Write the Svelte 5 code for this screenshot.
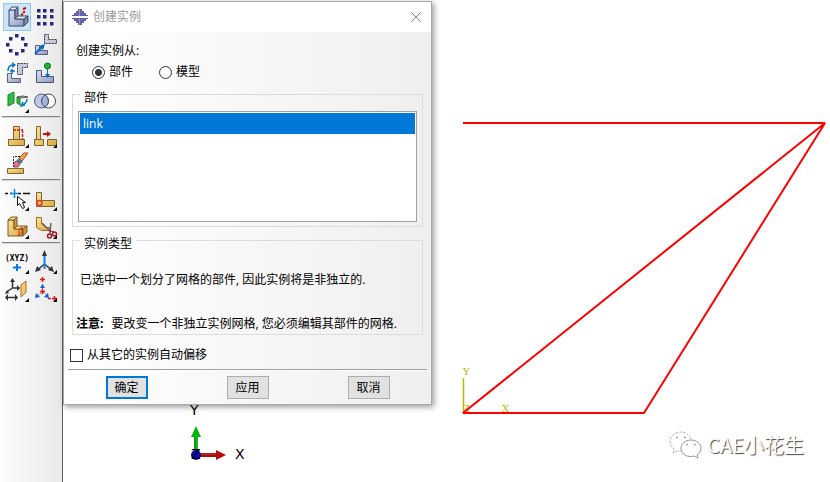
<script lang="ts">
  type Tool = { id: string; label: string; menu?: boolean }

  // Toolbox groups, two tools per row
  const groups: Tool[][] = [
    [
      { id: 'create', label: '创建实例' },
      { id: 'linear', label: '线性阵列' },
      { id: 'radial', label: '环形阵列' },
      { id: 'translate', label: '平移实例' },
      { id: 'rotate', label: '旋转实例' },
      { id: 'translateTo', label: '平移到' },
      { id: 'face', label: '面约束', menu: true },
      { id: 'merge', label: '合并/切割实例' }
    ],
    [
      { id: 'link', label: '链接实例', menu: true },
      { id: 'replace', label: '替换实例', menu: true },
      { id: 'erase', label: '删除特征' }
    ],
    [
      { id: 'query', label: '创建分区', menu: true },
      { id: 'partEdge', label: '分割边', menu: true },
      { id: 'partCell', label: '分割几何元素', menu: true },
      { id: 'cut', label: '几何编辑', menu: true }
    ],
    [
      { id: 'point', label: '创建基准点', menu: true },
      { id: 'axis', label: '创建基准轴', menu: true },
      { id: 'plane', label: '创建基准平面', menu: true },
      { id: 'csys', label: '创建基准坐标系', menu: true }
    ]
  ]

  const grid = [8, 14, 21]
  const ring = [0, 1, 2, 3, 4, 5, 6, 7].map((i) => ({
    x: Math.round(14 + 9 * Math.cos((i * Math.PI) / 4)),
    y: Math.round(14 + 9 * Math.sin((i * Math.PI) / 4))
  }))

  let open = $state(true)
  let active = $state('create')
  let source = $state('part')
  let part = $state('link')
  let autoOffset = $state(false)

  function selectTool(id: string) {
    active = id
    if (id === 'create') open = true
  }
</script>

{#snippet icon(id: string)}
  {#if id === 'create'}
    <path d="M6 7h6v9h9v7H6z" fill="url(#steel)" stroke="#3d4868" />
    <path d="M6 7l3-3h6l-3 3zM12 16l3-3h10l-4 3z" fill="#e6ecf8" stroke="#3d4868" />
    <path d="M12 7l3-3v9l-3 3zM21 16l4-3v6l-4 4z" fill="#7d8bb0" stroke="#3d4868" />
    <path d="M20 6l3-1M20 9h2M18 12l2-1" fill="none" stroke="#d00" stroke-width="2" />
  {:else if id === 'linear'}
    {#each grid as x}
      {#each grid as y}
        <rect x={x - 2} y={y - 2} width="3.500" height="3.500" fill="#27277f" />
      {/each}
    {/each}
  {:else if id === 'radial'}
    {#each ring as dot}
      <rect x={dot.x - 2} y={dot.y - 2} width="3.500" height="3.500" fill="#27277f" />
    {/each}
  {:else if id === 'translate'}
    <path d="M13.500 3.500h4v5h8v4h-12z" fill="#c3cbe0" stroke="#333" stroke-dasharray="2 1" />
    <path d="M4.500 14.500h4v5h8v4h-12z" fill="url(#steel)" stroke="#56617f" />
    <path d="M4 23l7-7" stroke="#06c" stroke-width="2" />
    <path d="M14 13l-2 6-4-4z" fill="#06c" />
  {:else if id === 'rotate'}
    <path d="M14.500 4.500h10v4h-5v7h-5z" fill="#c3cbe0" stroke="#333" stroke-dasharray="2 1" />
    <path d="M4.500 14.500h4v5h9v4h-13z" fill="url(#steel)" stroke="#56617f" />
    <path d="M5 12c0-4 2-6 5-6M9 10v5M7 12h5" fill="none" stroke="#0a6fd0" stroke-width="1.500" />
    <path d="M9 3l4 3-4 3z" fill="#0a6fd0" />
  {:else if id === 'translateTo'}
    <path d="M5.500 11.500h5v6h12v6h-17z" fill="url(#steel)" stroke="#46516f" />
    <path d="M16.500 8v8" stroke="#0a6fd0" />
    <path d="M14 15h5l-2.500 4z" fill="#06c" />
    <circle cx="16.500" cy="7" r="3" fill="#18b82a" stroke="#087014" />
  {:else if id === 'face'}
    <path d="M5 8l6-3v11l-6 3z" fill="#34bd42" stroke="#128422" />
    <path d="M14 10l3 1v7l-3-2z" fill="#34bd42" stroke="#128422" />
    <path d="M14 10l6-1 5 1-8 1z" fill="#ddd" stroke="#555" />
    <path d="M24 12c0 3-2 5-5 6M22 18l-4 1 2-4" fill="none" stroke="#0878c8" stroke-width="1.500" />
  {:else if id === 'merge'}
    <circle cx="17.500" cy="14" r="7" fill="#fff" stroke="#444" />
    <circle cx="10.500" cy="14" r="7" fill="#bcc7e2" stroke="#555c70" />
    <path d="M14 8a7 7 0 0 1 0 12a7 7 0 0 1 0-12z" fill="#a5b3d8" stroke="#3d4868" />
  {:else if id === 'link'}
    <path d="M10.500 4.500h6v13h5v6h-16v-6h5z" fill="url(#brass)" stroke="#80652a" />
    <path d="M5.500 17.500h16" stroke="#80652a" />
    <path d="M10 8h10M19.500 8v10" fill="none" stroke="#e01818" stroke-width="1.500" stroke-dasharray="3 1" />
  {:else if id === 'replace'}
    <path d="M5.500 4.500h4v13h3v6h-9v-6h2zM16.500 17.500h9v6h-9z" fill="url(#brass)" stroke="#80652a" />
    <path d="M3.500 17.500h9" stroke="#80652a" />
    <path d="M12 12h5" stroke="#c81010" stroke-width="2" />
    <path d="M16 9l4 3-4 3z" fill="#c81010" />
  {:else if id === 'erase'}
    <path d="M10.500 17V6.500h7" fill="none" stroke="#222" stroke-dasharray="2 1" />
    <path d="M4.500 18.500h16v5h-16z" fill="url(#brass)" stroke="#80652a" />
    <path d="M16 8l5-5h4l-6 8z" fill="#f5a04a" stroke="#9a5a1c" />
    <path d="M13 11l3-3 4 4-3 2z" fill="#5a719c" />
    <path d="M11 13l2-2 4 3-2 3-4 0z" fill="#dc7c94" stroke="#934558" />
  {:else if id === 'query'}
    <path d="M2 8.500h3M7 8.500h2M15 8.500h3M20 8.500h7" stroke="#111" stroke-width="1.500" />
    <path d="M11.500 4v9M7 8.500h8" stroke="#0b86e4" stroke-width="1.500" />
    <path d="M14.500 11.500v9l2-2 3 5 2-1-2-5h3z" fill="#fff" stroke="#111" />
  {:else if id === 'partEdge'}
    <path d="M5.500 7.500h5v8h13v6h-18z" fill="url(#brass)" stroke="#80652a" />
    <circle cx="8.500" cy="18" r="2.500" fill="none" stroke="#e32" stroke-width="1.500" />
  {:else if id === 'partCell'}
    <path d="M5 7h6v9h9v7H5z" fill="url(#brass)" stroke="#7a5d20" />
    <path d="M5 7l3-3h6l-3 3zM11 16l3-3h10l-4 3z" fill="#f5db91" stroke="#7a5d20" />
    <path d="M11 7l3-3v9l-3 3zM20 16l4-3v6l-4 4z" fill="#c89b3d" stroke="#7a5d20" />
    <path d="M16 17l3-3v6l-3 3z" fill="none" stroke="#e01818" />
  {:else if id === 'cut'}
    <path d="M5.500 4.500h5v6l4 4h5v3h-9l-5-3z" fill="url(#brass)" stroke="#a06a20" />
    <path d="M11 10l9 9M20 10l-1 8" stroke="#666" stroke-width="1.500" />
    <circle cx="18.500" cy="23" r="2" fill="none" stroke="#a01822" stroke-width="1.500" />
    <circle cx="23.500" cy="21" r="2" fill="none" stroke="#a01822" stroke-width="1.500" />
    <path d="M19 17v4M19 18l4 1" stroke="#a01822" />
  {:else if id === 'point'}
    <text class="xyz" x="14" y="13" text-anchor="middle">(XYZ)</text>
    <path d="M14 16v7M10 19.500h8" stroke="#0b75d8" stroke-width="2" />
  {:else if id === 'axis'}
    <path d="M13.500 16l-7 6M13.500 16l7 6" stroke="#333" stroke-width="1.500" />
    <path d="M13.500 5v16" stroke="#0b86e4" stroke-width="2" />
    <path d="M11 8l2.500-6 2.500 6zM4 24l2-6 4 4zM23 24l-2-6-4 4z" fill="#333" />
  {:else if id === 'plane'}
    <path d="M9.500 4v8h7M9.500 12l-6 4M4 21.500h10" fill="none" stroke="#333" stroke-width="1.500" />
    <path d="M7 6l2.500-4 2.500 4zM14 9l3 3-3 3zM2 18l2-4 2 3zM5 18l-3 3.500 3 3.500zM12 18l3 3.500-3 3.500z" fill="#333" />
    <path d="M18 9l5-4v11l-5 5z" fill="#f6c878" stroke="#a96c22" />
  {:else if id === 'csys'}
    <path d="M11.500 8v8l-5 4M12 16l5 4" fill="none" stroke="#777" stroke-dasharray="2 1" />
    <path d="M11.500 1v5M9 3.500h5M11.500 13v5M9 15.500h5M23.500 20v5M21 22.500h5M17 22.500h3" stroke="#e01818" stroke-width="1.500" />
    <path d="M9 12l2.500-4 2.500 4zM4 22l1-5 4 4zM18 22l-1-5-4 4z" fill="#0b65c8" />
  {/if}
{/snippet}

<svg class="defs" width="0" height="0" aria-hidden="true">
  <defs>
    <linearGradient id="steel" x1="0" y1="0" x2="1" y2="1">
      <stop offset="0" stop-color="#dbe3f4" />
      <stop offset="1" stop-color="#8d9bc0" />
    </linearGradient>
    <linearGradient id="brass" x1="0" y1="0" x2="1" y2="1">
      <stop offset="0" stop-color="#f9e39a" />
      <stop offset="1" stop-color="#dba944" />
    </linearGradient>
  </defs>
</svg>

<div class="app">
  <nav class="toolbox" aria-label="工具">
    {#each groups as group}
      <div class="group">
        {#each group as tool}
          <button
            class="tool"
            class:active={active === tool.id}
            aria-label={tool.label}
            onclick={() => selectTool(tool.id)}
          >
            <svg viewBox="0 0 28 28" width="28" height="28" aria-hidden="true">
              {@render icon(tool.id)}
              {#if tool.menu}
                <path d="M26 22v4h-4z" fill="#000" />
              {/if}
            </svg>
          </button>
        {/each}
      </div>
    {/each}
  </nav>

  <main class="viewport">
    <svg class="scene" viewBox="63 0 767 482" preserveAspectRatio="xMinYMin meet">
      <!-- datum axes -->
      <path d="M463.500 378v34" stroke="#b8b800" stroke-width="1.500" />
      <g class="datum">
        <text x="463" y="375">Y</text>
        <text x="502" y="412">X</text>
        <text x="463" y="412">Z</text>
      </g>
      <!-- link part -->
      <path
        d="M463 123H825L463 413H644L825 123"
        fill="none"
        stroke="#f00"
        stroke-width="2"
        stroke-linejoin="bevel"
      />
      <!-- view triad -->
      <path d="M196 455V436" stroke="#0a9d10" stroke-width="4" />
      <path d="M197 455V436" stroke="#2bd334" />
      <path d="M191 437l5-11 5 11z" fill="#08b510" />
      <path d="M198 455h18" stroke="#a50f10" stroke-width="4" />
      <path d="M198 454h18" stroke="#d23030" />
      <path d="M216 450l10 5-10 5z" fill="#b80b0d" />
      <circle cx="196" cy="455" r="5" fill="#0808b4" />
      <g class="triad">
        <text x="190" y="415">Y</text>
        <text x="235" y="459">X</text>
        <text x="191" y="459">Z</text>
      </g>
    </svg>

    <div class="watermark">
      <svg viewBox="0 0 34 30" width="34" height="30" aria-hidden="true">
        <path
          d="M22 9C20 4 16 2 12 2C6 2 1 6 1 11c0 4 2 6 4 8l-1 4 5-2h5"
          fill="none"
          stroke="#bbb"
          stroke-dasharray="3 1"
        />
        <path
          d="M22 10c6 0 10 4 10 8 0 3-1 5-4 7l1 3-4-2c-7 2-13-2-13-8 0-4 4-8 10-8z"
          fill="#fff"
          stroke="#999"
        />
        <path d="M7 8l2-1M15 8l2-1M17 15l2-1M25 15l2-1" stroke="#888" />
      </svg>
      <span>CAE小花生</span>
    </div>
  </main>

  {#if open}
    <div class="dialog" role="dialog" aria-labelledby="dialog-title">
      <header class="titlebar">
        <svg viewBox="0 0 16 16" width="16" height="16" aria-hidden="true">
          <path d="M6 0h4v2h2v2h2v3H2V4h2V2h2zM2 9h12v3h-2v2h-2v2H6v-2H4v-2H2z" fill="#6464a8" />
          <path d="M0 6h3v1H0zM0 9h3v1H0zM13 6h3v1h-3zM13 9h3v1h-3z" fill="#55559a" />
          <path d="M7.500 0v7M7.500 9v7" stroke="#9898cc" />
        </svg>
        <h1 id="dialog-title">创建实例</h1>
        <button class="close" aria-label="关闭" onclick={() => (open = false)}>
          <svg viewBox="0 0 12 12" width="12" height="12" aria-hidden="true">
            <path d="M1 1l10 10M11 1L1 11" stroke="#888" />
          </svg>
        </button>
      </header>

      <form class="body" onsubmit={(e) => e.preventDefault()}>
        <div class="source" role="radiogroup" aria-labelledby="source-label">
          <div id="source-label">创建实例从:</div>
          <div class="radios">
            <label><input type="radio" value="part" bind:group={source} />部件</label>
            <label><input type="radio" value="model" bind:group={source} />模型</label>
          </div>
        </div>

        <fieldset class="parts">
          <legend>部件</legend>
          <select size="5" aria-label="部件" bind:value={part}>
            <option value="link">link</option>
          </select>
        </fieldset>

        <fieldset class="kind">
          <legend>实例类型</legend>
          <p class="info">已选中一个划分了网格的部件, 因此实例将是非独立的.</p>
          <p class="note"><b>注意:</b>要改变一个非独立实例网格, 您必须编辑其部件的网格.</p>
        </fieldset>

        <label class="offset">
          <input type="checkbox" bind:checked={autoOffset} />从其它的实例自动偏移
        </label>

        <footer class="actions">
          <button class="primary" type="submit">确定</button>
          <button type="button">应用</button>
          <button type="button" onclick={() => (open = false)}>取消</button>
        </footer>
      </form>
    </div>
  {/if}
</div>

<style>
  :global(body) {
    margin: 0;
    background: #fff;
  }

  .app {
    position: relative;
    display: flex;
    min-height: 100vh;
    overflow: hidden;
    color: #000;
    font-family: 'Open Sans', 'Noto Sans CJK SC', sans-serif;
    font-size: 12px;
    line-height: 20px;
  }

  .defs {
    position: absolute;
  }

  button,
  select,
  input {
    font: inherit;
    color: inherit;
    margin: 0;
  }

  /* toolbox */
  .toolbox {
    box-sizing: border-box;
    flex: none;
    width: 63px;
    padding: 3px 2px;
    border-right: 1px solid #606060;
    background: linear-gradient(to right, #fdfdfd, #e9e9e9);
  }

  .group {
    display: grid;
    grid-template-columns: 28px 28px;
    grid-auto-rows: 28px;
    padding-left: 1px;
  }

  .group + .group {
    margin-top: 1px;
    padding-top: 4px;
    border-top: 2px groove #d8d8d8;
  }

  .tool {
    padding: 0;
    border: 0;
    background: none;
  }

  .tool svg {
    display: block;
  }

  .tool.active {
    background: #cce4f7;
    box-shadow: inset 0 0 0 1px #90c8f6;
  }

  .xyz {
    font-family: 'DejaVu Sans Mono', monospace;
    font-size: 8px;
    font-weight: bold;
  }

  /* viewport */
  .viewport {
    position: relative;
    flex: 1;
    min-width: 0;
    background: #fff;
  }

  .scene {
    display: block;
    width: 100%;
  }

  .datum {
    fill: #b8b800;
    font-family: 'DejaVu Serif', serif;
    font-size: 10px;
  }

  .triad {
    font-family: 'DejaVu Sans', sans-serif;
    font-size: 14px;
  }

  .watermark {
    position: absolute;
    right: 26px;
    bottom: 21px;
    display: flex;
    align-items: center;
    gap: 4px;
    color: #fff;
    font-family: 'Noto Sans CJK SC', sans-serif;
    font-size: 20px;
    line-height: 32px;
    text-shadow: 1px 1px 1px #444;
  }

  /* dialog window */
  .dialog {
    position: absolute;
    top: 1px;
    left: 63px;
    box-sizing: border-box;
    width: 369px;
    border: 1px solid #a8a8a8;
    background: linear-gradient(to right, #fff, #efefef);
    box-shadow: 2px 2px 6px rgba(0, 0, 0, 0.4);
  }

  .titlebar {
    display: flex;
    align-items: center;
    gap: 5px;
    height: 30px;
    padding: 0 9px 0 8px;
    background: #fff;
  }

  h1 {
    flex: 1;
    margin: 0;
    color: #999;
    font-size: 12px;
    font-weight: normal;
  }

  .close {
    display: flex;
    padding: 0;
    border: 0;
    background: none;
  }

  .body {
    padding: 9px 4px 5px;
  }

  .source {
    padding-left: 8px;
  }

  .radios {
    display: flex;
    gap: 26px;
    padding-left: 16px;
  }

  .radios label,
  .offset {
    display: flex;
    align-items: center;
    height: 22px;
  }

  .radios label {
    gap: 4px;
  }

  input {
    appearance: none;
    box-sizing: border-box;
    width: 13px;
    height: 13px;
    border: 1px solid #333;
    background: #fff;
  }

  input[type='radio'] {
    border-radius: 50%;
  }

  input[type='radio']:checked {
    background: radial-gradient(circle, #333 3px, #fff 4px);
  }

  input[type='checkbox']:checked {
    background: #333;
    box-shadow: inset 0 0 0 2px #fff;
  }

  fieldset {
    min-width: 0;
    margin: 0 4px;
    border: 1px solid #dcdcdc;
  }

  legend {
    padding: 8px 4px 0;
    line-height: 14px;
  }

  .parts {
    padding: 6px 5px 4px;
  }

  .parts legend {
    margin-left: 2px;
  }

  .kind {
    margin-top: 2px;
    padding: 0 3px;
  }

  .kind legend {
    margin-left: 4px;
  }

  select {
    display: block;
    box-sizing: border-box;
    width: 100%;
    height: 111px;
    padding: 1px;
    border: 1px solid #a0a0a0;
    border-radius: 0;
    outline: 0;
    background: #fff;
    overflow: hidden;
  }

  option {
    box-sizing: border-box;
    height: 21px;
    min-height: 21px;
    padding: 2px 3px 0;
  }

  option:checked {
    background: #0078d7 linear-gradient(#0078d7, #0078d7);
    color: #fff;
  }

  p {
    margin: 0;
    white-space: nowrap;
  }

  .info {
    padding: 19px 4px 24px;
  }

  .note b {
    margin-right: 8px;
  }

  .offset {
    gap: 4px;
    margin-top: 9px;
    padding-left: 2px;
  }

  .actions {
    display: grid;
    grid-template-columns: repeat(3, 121px);
    justify-content: center;
    justify-items: center;
    margin-top: 3px;
    padding-top: 6px;
    border-top: 1px solid #a0a0a0;
    box-shadow: inset 0 1px #fff;
  }

  .actions button {
    width: 42px;
    height: 23px;
    padding: 0;
    border: 1px solid #adadad;
    background: #e1e1e1;
  }

  .actions .primary {
    border: 2px solid #0078d7;
  }
</style>
